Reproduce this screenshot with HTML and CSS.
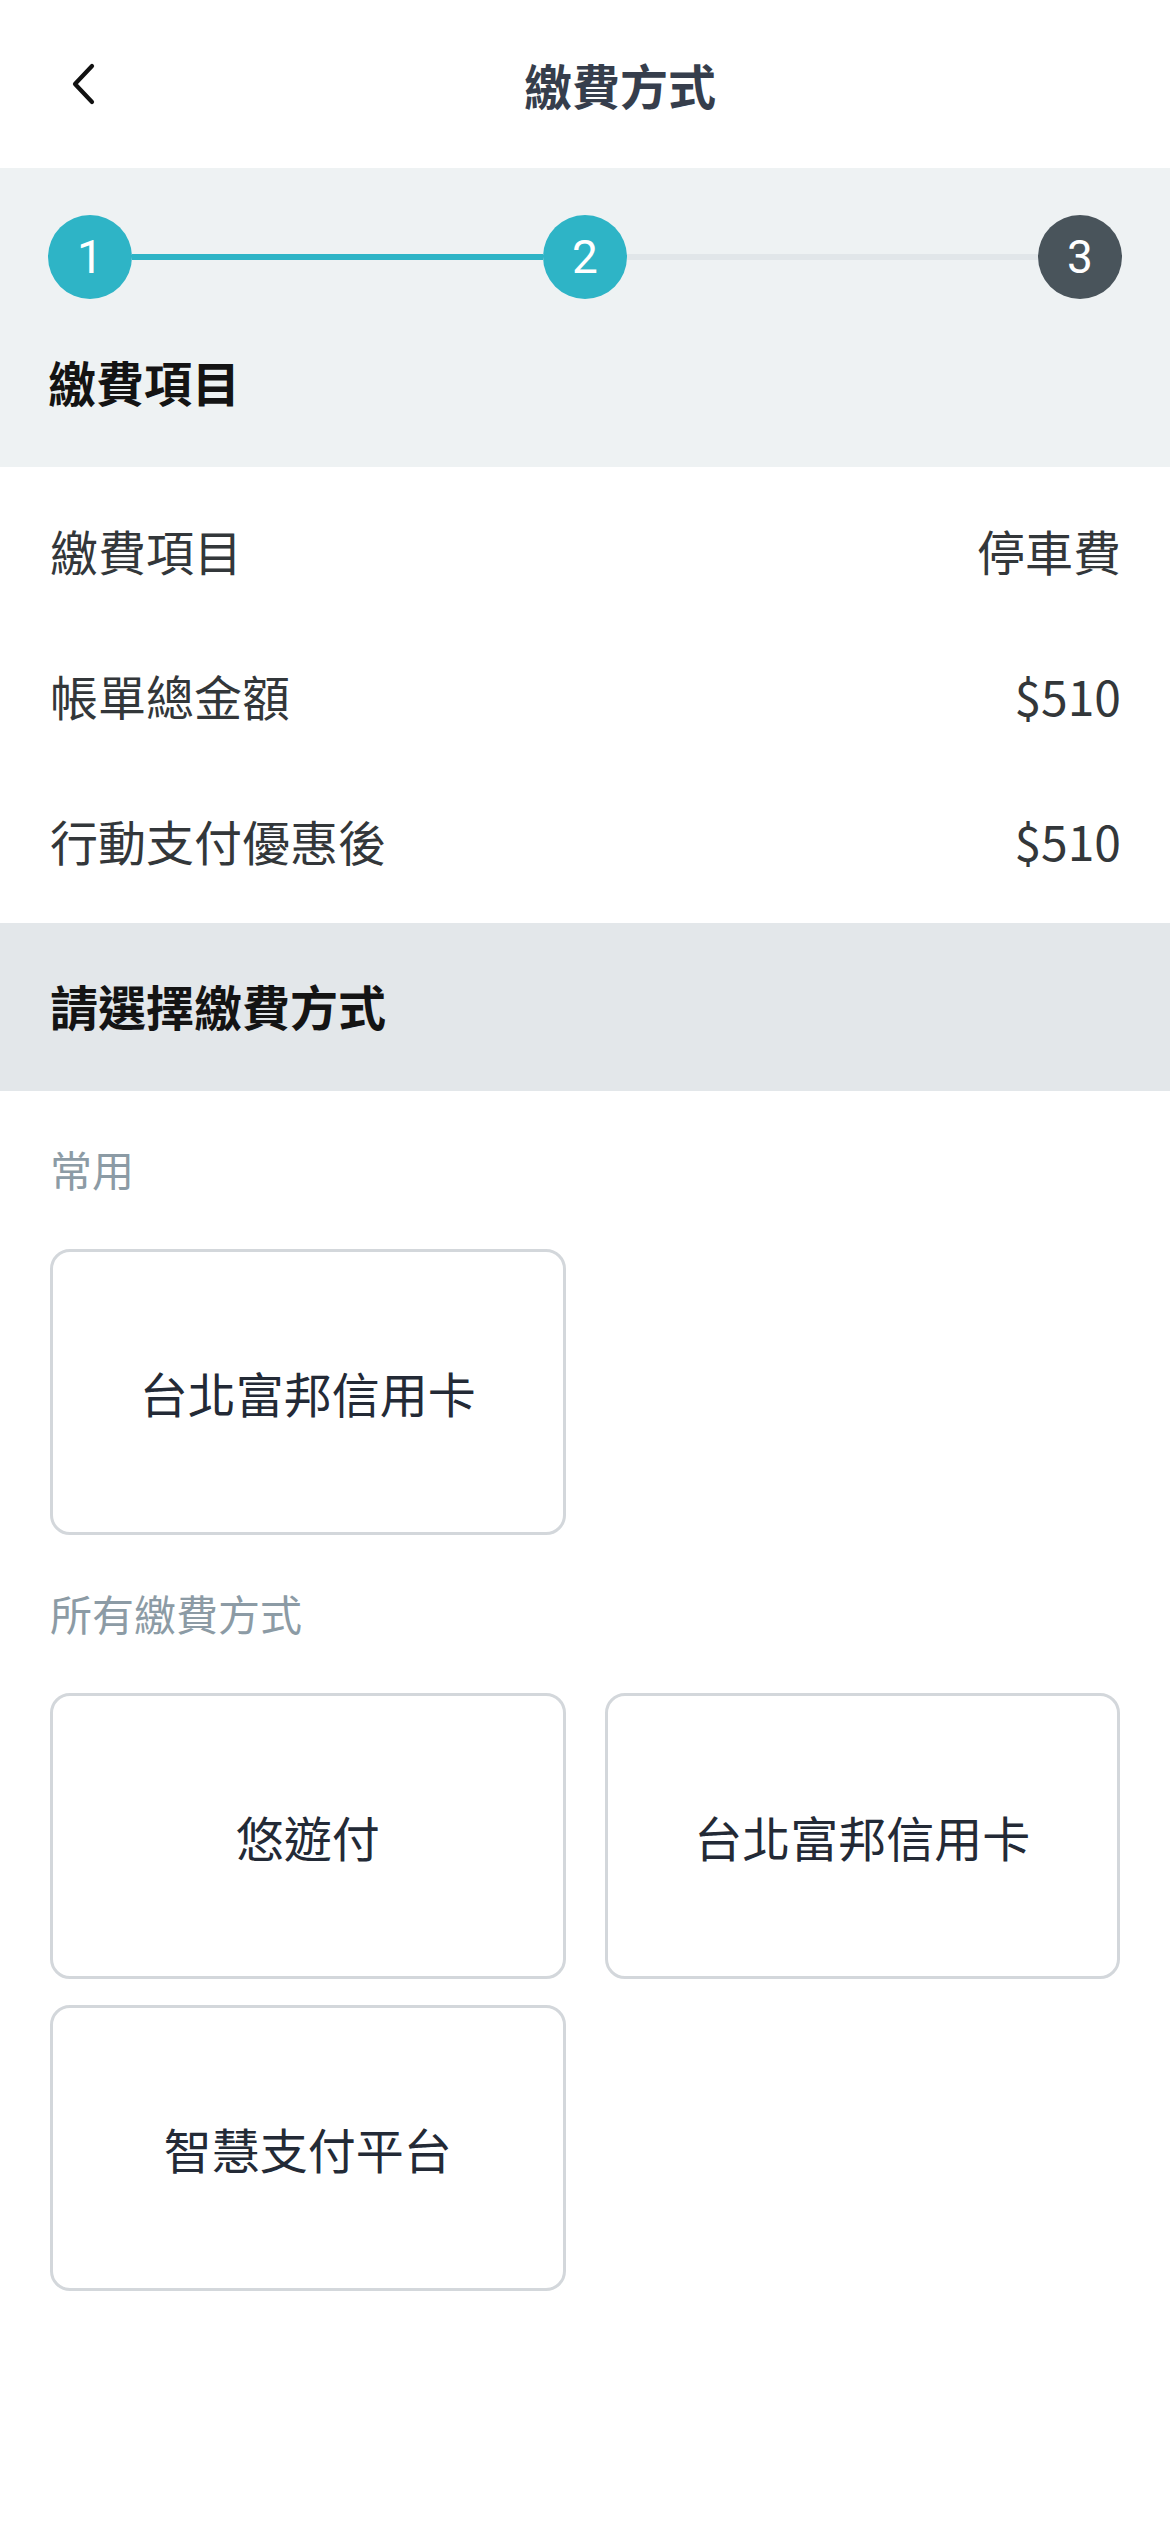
FILE: index.html
```html
<!DOCTYPE html>
<html lang="zh-Hant">
<head>
<meta charset="utf-8">
<title>繳費方式</title>
<link rel="stylesheet" href="styles.css">
</head>
<body>
<div class="page">
  <header class="topbar">
    <div class="back">
      <svg class="back-icon" viewBox="0 0 30 44" width="30" height="44" aria-hidden="true">
        <polyline points="24,4 7,22 24,40" fill="none" stroke="#111" stroke-width="4.2" stroke-linecap="round" stroke-linejoin="round"/>
      </svg>
    </div>
    <h1 class="title">繳費方式</h1>
    <div class="spacer"></div>
  </header>

  <section class="stepper-section">
    <div class="stepper">
      <div class="step step-active">1</div>
      <div class="bar bar-active"></div>
      <div class="step step-active">2</div>
      <div class="bar"></div>
      <div class="step step-pending">3</div>
    </div>
    <h2 class="section-title">繳費項目</h2>
  </section>

  <section class="details">
    <div class="row"><span>繳費項目</span><span>停車費</span></div>
    <div class="row"><span>帳單總金額</span><span>$510</span></div>
    <div class="row"><span>行動支付優惠後</span><span>$510</span></div>
  </section>

  <section class="choose-bar">
    <h2 class="section-title">請選擇繳費方式</h2>
  </section>

  <section class="methods">
    <div class="label">常用</div>
    <div class="grid">
      <div class="card">台北富邦信用卡</div>
    </div>
    <div class="label">所有繳費方式</div>
    <div class="grid">
      <div class="card">悠遊付</div>
      <div class="card">台北富邦信用卡</div>
      <div class="card">智慧支付平台</div>
    </div>
  </section>
</div>
</body>
</html>
```

FILE: styles.css
```css
* {
  box-sizing: border-box;
}

html, body {
  margin: 0;
  padding: 0;
  background: #ffffff;
}

body {
  font-family: "Noto Sans CJK TC", "Noto Sans", sans-serif;
  color: #333638;
}

.page {
  width: 1170px;
  min-height: 2532px;
  background: #ffffff;
}

/* Top bar */
.topbar {
  height: 168px;
  display: grid;
  grid-template-columns: 140px 1fr 70px;
  align-items: center;
  padding: 0;
}

.back {
  display: flex;
  align-items: center;
  height: 44px;
  padding-left: 68px;
}

.back-icon {
  display: block;
}

.title {
  margin: 0;
  font-size: 48px;
  line-height: 66px;
  font-weight: 700;
  color: #363e4c;
  text-align: center;
}

/* Stepper */
.stepper-section {
  background: #eef2f3;
  padding: 47px 48px 53px 48px;
}

.stepper {
  display: flex;
  align-items: center;
}

.step {
  width: 84px;
  height: 84px;
  border-radius: 50%;
  flex: none;
  display: flex;
  align-items: center;
  justify-content: center;
  font-family: "Roboto", "Liberation Sans", sans-serif;
  font-size: 46px;
  color: #ffffff;
  line-height: 1;
}

.step-active {
  background: #2eb4c6;
}

.step-pending {
  background: #49545b;
}

.bar {
  flex: 1;
  height: 6px;
  background: #e1e6e9;
}

.bar-active {
  background: #2eb4c6;
}

.section-title {
  margin: 0;
  font-size: 48px;
  line-height: 66px;
  font-weight: 700;
  color: #141414;
}

.stepper-section .section-title {
  margin-top: 49px;
}

/* Detail rows */
.details {
  padding: 10px 49px 11px 50px;
}

.row {
  height: 145px;
  display: flex;
  align-items: center;
  justify-content: space-between;
  font-size: 48px;
  line-height: 66px;
  color: #33373a;
}

/* Choose bar */
.choose-bar {
  background: #e3e7ea;
  height: 168px;
  padding: 0 50px 4px;
  display: flex;
  align-items: center;
}

/* Methods */
.methods {
  padding: 0 50px 0 50px;
}

.label {
  font-size: 42px;
  line-height: 60px;
  color: #8c9ba5;
  padding: 48px 0 50px;
}

.grid {
  display: grid;
  grid-template-columns: 1fr 1fr;
  column-gap: 39px;
  row-gap: 26px;
}

.card {
  height: 286px;
  border: 3px solid #d3d7db;
  border-radius: 20px;
  display: flex;
  align-items: center;
  justify-content: center;
  font-size: 48px;
  line-height: 66px;
  color: #232a36;
  background: #ffffff;
}
```
